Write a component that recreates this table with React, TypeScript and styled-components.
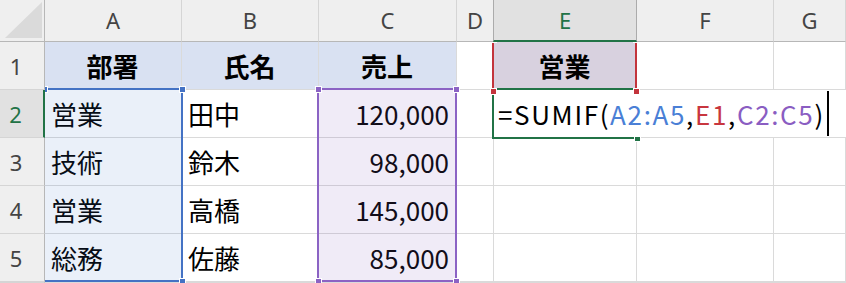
import React from "react";
import styled, { createGlobalStyle, css } from "styled-components";

const Global = createGlobalStyle`
  html, body { margin: 0; padding: 0; background: #fff; overflow: hidden; }
  * { box-sizing: border-box; }
`;

const GREEN = "#217346";
const BLUE = "#4472c4";
const PURPLE = "#8b63c4";
const RED = "#c3343c";

const Sheet = styled.div`
  display: grid;
  grid-template-columns: 45px 137px 137px 138px 37px 143px 137px 1fr;
  grid-template-rows: 42px 48px 48px 48px 48px 48px 1fr;
  width: 846px;
  height: 283px;
  overflow: hidden;
  background: #fff;
  font-family: "Noto Sans CJK JP", "Noto Sans", sans-serif;
`;

const Corner = styled.div`
  grid-column: 1;
  grid-row: 1;
  z-index: 6;
  background: #efefef;
  border-right: 1px solid #b7b7b7;
  border-bottom: 1px solid #b7b7b7;
  display: flex;
  align-items: flex-end;
  justify-content: flex-end;
  padding: 0 2px 3px 0;
`;

const Triangle = styled.div`
  width: 37px;
  height: 36px;
  background: #dadada;
  clip-path: polygon(100% 0, 100% 100%, 0 100%);
`;

const ColHeader = styled.div<{ $active?: boolean; $col: number }>`
  grid-column: ${(p) => p.$col};
  grid-row: 1;
  z-index: 6;
  background: #efefef;
  border-right: 1px solid #d5d5d5;
  border-bottom: 1px solid #b7b7b7;
  display: flex;
  align-items: center;
  justify-content: center;
  font-family: "Noto Sans", "Open Sans", sans-serif;
  font-size: 22px;
  color: #444;
  padding-bottom: 1px;
  ${(p) =>
    p.$active &&
    css`
      background: #e1e1e1;
      color: ${GREEN};
      border-right: 1px solid #ababab;
      border-left: 1px solid #ababab;
      margin-left: -1px;
      border-bottom: 2px solid ${GREEN};
    `}
`;

const RowHeader = styled.div<{ $active?: boolean; $row: number }>`
  grid-column: 1;
  grid-row: ${(p) => p.$row};
  z-index: 6;
  background: #efefef;
  border-right: 1px solid #b7b7b7;
  border-bottom: 1px solid #d5d5d5;
  display: flex;
  align-items: center;
  justify-content: center;
  padding-right: 12px;
  font-family: "Noto Sans", "Open Sans", sans-serif;
  font-size: 22px;
  color: #444;
  ${(p) =>
    p.$active &&
    css`
      background: #e1e1e1;
      color: ${GREEN};
      border-right: 2px solid ${GREEN};
    `}
`;

const Cell = styled.div<{
  $col: number;
  $row: number;
  $bg?: string;
  $align?: "left" | "right" | "center";
  $bold?: boolean;
}>`
  grid-column: ${(p) => p.$col};
  grid-row: ${(p) => p.$row};
  background: ${(p) => p.$bg || "#fff"};
  border-right: 1px solid #dadada;
  border-bottom: 1px solid #dadada;
  display: flex;
  align-items: center;
  justify-content: ${(p) =>
    p.$align === "right" ? "flex-end" : p.$align === "center" ? "center" : "flex-start"};
  padding: 0 7px 0 6px;
  font-size: 26px;
  font-weight: ${(p) => (p.$bold ? 700 : 400)};
  color: #000;
  white-space: nowrap;
  overflow: hidden;
`;

const Range = styled.div<{
  $c1: number;
  $c2: number;
  $r1: number;
  $r2: number;
  $color: string;
  $fill?: string;
  $sides: string;
  $margin: string;
  $z: number;
}>`
  grid-column: ${(p) => p.$c1} / ${(p) => p.$c2};
  grid-row: ${(p) => p.$r1} / ${(p) => p.$r2};
  margin: ${(p) => p.$margin};
  position: relative;
  z-index: ${(p) => p.$z};
  background: ${(p) => p.$fill || "transparent"};
  border: 0 solid ${(p) => p.$color};
  ${(p) => p.$sides.includes("t") && "border-top-width: 2px;"}
  ${(p) => p.$sides.includes("r") && "border-right-width: 2px;"}
  ${(p) => p.$sides.includes("b") && "border-bottom-width: 2px;"}
  ${(p) => p.$sides.includes("l") && "border-left-width: 2px;"}
  pointer-events: none;
`;

const Handle = styled.span<{ $color: string; $pos: "tl" | "tr" | "bl" | "br" }>`
  position: absolute;
  width: 7px;
  height: 7px;
  background: ${(p) => p.$color};
  border: 1px solid #fff;
  ${(p) => (p.$pos[0] === "t" ? "top: -4px;" : "bottom: -5px;")}
  ${(p) => (p.$pos[1] === "l" ? "left: -4px;" : "right: -5px;")}
`;

const Editor = styled.div`
  grid-column: 6 / -1;
  grid-row: 3 / 4;
  margin-bottom: 1px;
  z-index: 3;
  background: #fff;
  display: flex;
  align-items: center;
  padding-left: 4px;
  font-size: 26px;
  letter-spacing: 1.65px;
  color: #000;
  white-space: nowrap;
`;

const Ref = styled.span<{ $color: string }>`
  color: ${(p) => p.$color};
`;

const Caret = styled.span`
  display: inline-block;
  width: 2px;
  height: 45px;
  background: #000;
  margin-left: 2px;
`;

const cols = ["A", "B", "C", "D", "E", "F", "G"];

const rows: string[][] = [
  ["部署", "氏名", "売上", "", "営業", "", ""],
  ["営業", "田中", "120,000", "", "", "", ""],
  ["技術", "鈴木", "98,000", "", "", "", ""],
  ["営業", "高橋", "145,000", "", "", "", ""],
  ["総務", "佐藤", "85,000", "", "", "", ""],
  ["", "", "", "", "", "", ""],
];

export default function App() {
  return (
    <>
      <Global />
      <Sheet>
        <Corner>
          <Triangle />
        </Corner>
        {cols.map((c, i) => (
          <ColHeader key={c} $col={i + 2} $active={c === "E"}>
            {c}
          </ColHeader>
        ))}
        {rows.map((r, ri) => (
          <React.Fragment key={ri}>
            <RowHeader $row={ri + 2} $active={ri === 1}>
              {ri < 5 ? ri + 1 : ""}
            </RowHeader>
            {r.map((v, ci) => {
              const header = ri === 0;
              let bg: string | undefined;
              if (header && ci <= 2) bg = "#d9e1f2";
              if (header && ci === 4) bg = "#d8d1df";
              const align = header ? "center" : ci === 2 ? "right" : "left";
              return (
                <Cell
                  key={ci}
                  $col={ci + 2}
                  $row={ri + 2}
                  $bg={bg}
                  $align={align}
                  $bold={header}
                >
                  {v}
                </Cell>
              );
            })}
          </React.Fragment>
        ))}

        <Range
          $c1={2}
          $c2={3}
          $r1={3}
          $r2={7}
          $color={BLUE}
          $fill="rgba(68,114,196,0.11)"
          $sides="trb"
          $margin="-2px -1px 0 0"
          $z={4}
        >
          <Handle $color={BLUE} $pos="tl" />
          <Handle $color={BLUE} $pos="tr" />
          <Handle $color={BLUE} $pos="br" />
        </Range>

        <Range
          $c1={4}
          $c2={5}
          $r1={3}
          $r2={7}
          $color={PURPLE}
          $fill="rgba(139,99,196,0.13)"
          $sides="trbl"
          $margin="-2px 0 0 -2px"
          $z={4}
        >
          <Handle $color={PURPLE} $pos="tl" />
          <Handle $color={PURPLE} $pos="tr" />
          <Handle $color={PURPLE} $pos="bl" />
          <Handle $color={PURPLE} $pos="br" />
        </Range>

        <Range
          $c1={6}
          $c2={7}
          $r1={3}
          $r2={4}
          $color={GREEN}
          $sides="trbl"
          $margin="-2px -1px -1px -2px"
          $z={2}
        >
          <Handle $color={GREEN} $pos="br" />
        </Range>

        <Editor>
          =SUMIF(<Ref $color="#4a7fd6">A2:A5</Ref>,<Ref $color="#c8363f">E1</Ref>,
          <Ref $color="#8a5dc2">C2:C5</Ref>)
          <Caret />
        </Editor>

        <Range
          $c1={6}
          $c2={7}
          $r1={2}
          $r2={3}
          $color={RED}
          $sides="lr"
          $margin="-2px 0 0 -2px"
          $z={5}
        >
          <Handle $color={RED} $pos="tl" />
          <Handle $color={RED} $pos="tr" />
          <Handle $color={RED} $pos="bl" />
          <Handle $color={RED} $pos="br" />
        </Range>
      </Sheet>
    </>
  );
}
